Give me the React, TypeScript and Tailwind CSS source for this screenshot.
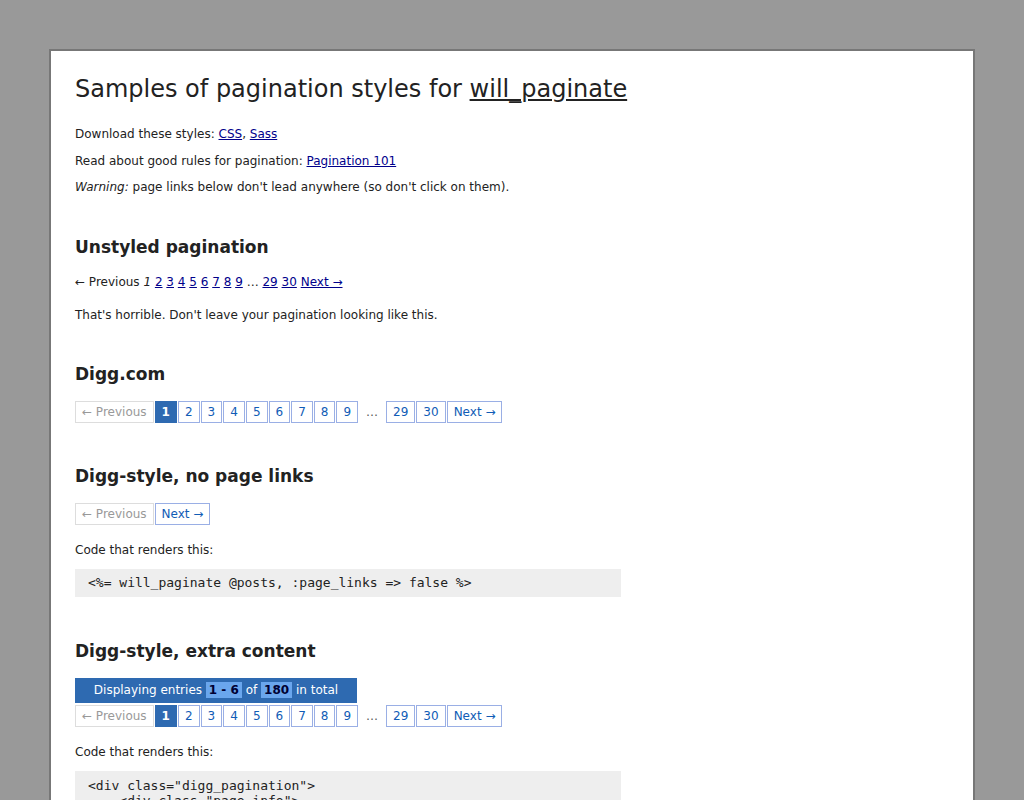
const pages = ["2", "3", "4", "5", "6", "7", "8", "9"];

const DiggPagination = ({ pageLinks = true }: { pageLinks?: boolean }) => {
  return (
    <div className="flex text-[12px] leading-[16px]">
      <span className="mr-px border border-[#dddddd] px-[6px] py-[2px] text-[#999999]">
        ← Previous
      </span>
      {pageLinks && (
        <>
          <em className="mr-px border border-[#2e6ab1] bg-[#2e6ab1] px-[6px] py-[2px] font-bold not-italic text-white">
            1
          </em>
          {pages.map((p) => (
            <a
              key={p}
              href="#"
              className="mr-px border border-[#9aafe5] px-[6px] py-[2px] text-[#105cb6] no-underline"
            >
              {p}
            </a>
          ))}
          <span className="mr-px border border-transparent px-[6px] py-[2px] text-[#555]">
            …
          </span>
          <a href="#" className="mr-px border border-[#9aafe5] px-[6px] py-[2px] text-[#105cb6]">
            29
          </a>
          <a href="#" className="mr-px border border-[#9aafe5] px-[6px] py-[2px] text-[#105cb6]">
            30
          </a>
        </>
      )}
      <a href="#" className="mr-px border border-[#9aafe5] px-[6px] py-[2px] text-[#105cb6]">
        Next →
      </a>
    </div>
  );
};

const CodeBlock = ({ children }: { children: string }) => (
  <pre className="w-[546px] bg-[#eeeeee] px-[13px] py-[6px] font-['DejaVu_Sans_Mono',monospace] text-[13px] leading-[16px] text-[#222]">
    {children}
  </pre>
);

const link = "text-[#00008b] underline";

export default function App() {
  return (
    <div className="min-h-[800px] bg-[#999999] pt-[49px] pb-[49px] font-['DejaVu_Sans',sans-serif] text-[#222]">
      <div className="mx-[49px] border-2 border-[#777777] bg-white px-[24px] pt-[22px] pb-[40px]">
        <h1 className="text-[24px] leading-[32px]">
          Samples of pagination styles for{" "}
          <a href="#" className="underline">
            will_paginate
          </a>
        </h1>

        <div className="mt-[20px] flex flex-col gap-[8.5px] text-[12px] leading-[18px]">
          <p>
            Download these styles: <a href="#" className={link}>CSS</a>,{" "}
            <a href="#" className={link}>Sass</a>
          </p>
          <p>
            Read about good rules for pagination:{" "}
            <a href="#" className={link}>Pagination 101</a>
          </p>
          <p>
            <em>Warning:</em> page links below don't lead anywhere (so don't click on them).
          </p>
        </div>

        {/* Unstyled */}
        <h2 className="mt-[39px] text-[17px] leading-[24px] font-bold">Unstyled pagination</h2>
        <div className="mt-[14px] text-[12px] leading-[18px]">
          ← Previous <em>1</em>{" "}
          {pages.map((p) => (
            <span key={p}>
              <a href="#" className={link}>{p}</a>{" "}
            </span>
          ))}
          … <a href="#" className={link}>29</a> <a href="#" className={link}>30</a>{" "}
          <a href="#" className={link}>Next →</a>
        </div>
        <p className="mt-[15px] text-[12px] leading-[18px]">
          That's horrible. Don't leave your pagination looking like this.
        </p>

        {/* Digg */}
        <h2 className="mt-[38px] text-[17px] leading-[24px] font-bold">Digg.com</h2>
        <div className="mt-[15px]">
          <DiggPagination />
        </div>

        {/* No page links */}
        <h2 className="mt-[41px] text-[17px] leading-[24px] font-bold">
          Digg-style, no page links
        </h2>
        <div className="mt-[15px]">
          <DiggPagination pageLinks={false} />
        </div>
        <p className="mt-[16px] text-[12px] leading-[18px]">Code that renders this:</p>
        <div className="mt-[10px]">
          <CodeBlock>{"<%= will_paginate @posts, :page_links => false %>"}</CodeBlock>
        </div>

        {/* Extra content */}
        <h2 className="mt-[42px] text-[17px] leading-[24px] font-bold">
          Digg-style, extra content
        </h2>
        <div className="mt-[15px]">
          <div className="mb-[2px] w-[282px] bg-[#2e6ab1] py-[5px] text-center text-[12px] leading-[15px] text-white">
            Displaying entries{" "}
            <b className="bg-[#6aa6ed] px-[3px] py-px text-[#000033]">1&nbsp;-&nbsp;6</b> of{" "}
            <b className="bg-[#6aa6ed] px-[3px] py-px text-[#000033]">180</b> in total
          </div>
          <DiggPagination />
        </div>
        <p className="mt-[16px] text-[12px] leading-[18px]">Code that renders this:</p>
        <div className="mt-[10px]">
          <pre className="w-[546px] bg-[#eeeeee] px-[13px] pt-[7px] pb-[6px] font-['DejaVu_Sans_Mono',monospace] text-[13px] leading-[15px] text-[#222]">
            {`<div class="digg_pagination">
    <div class="page_info">
        <%= page_entries_info @posts %>
    </div>
    <%= will_paginate @posts, :container => false %>
</div>`}
          </pre>
        </div>
      </div>
    </div>
  );
}
